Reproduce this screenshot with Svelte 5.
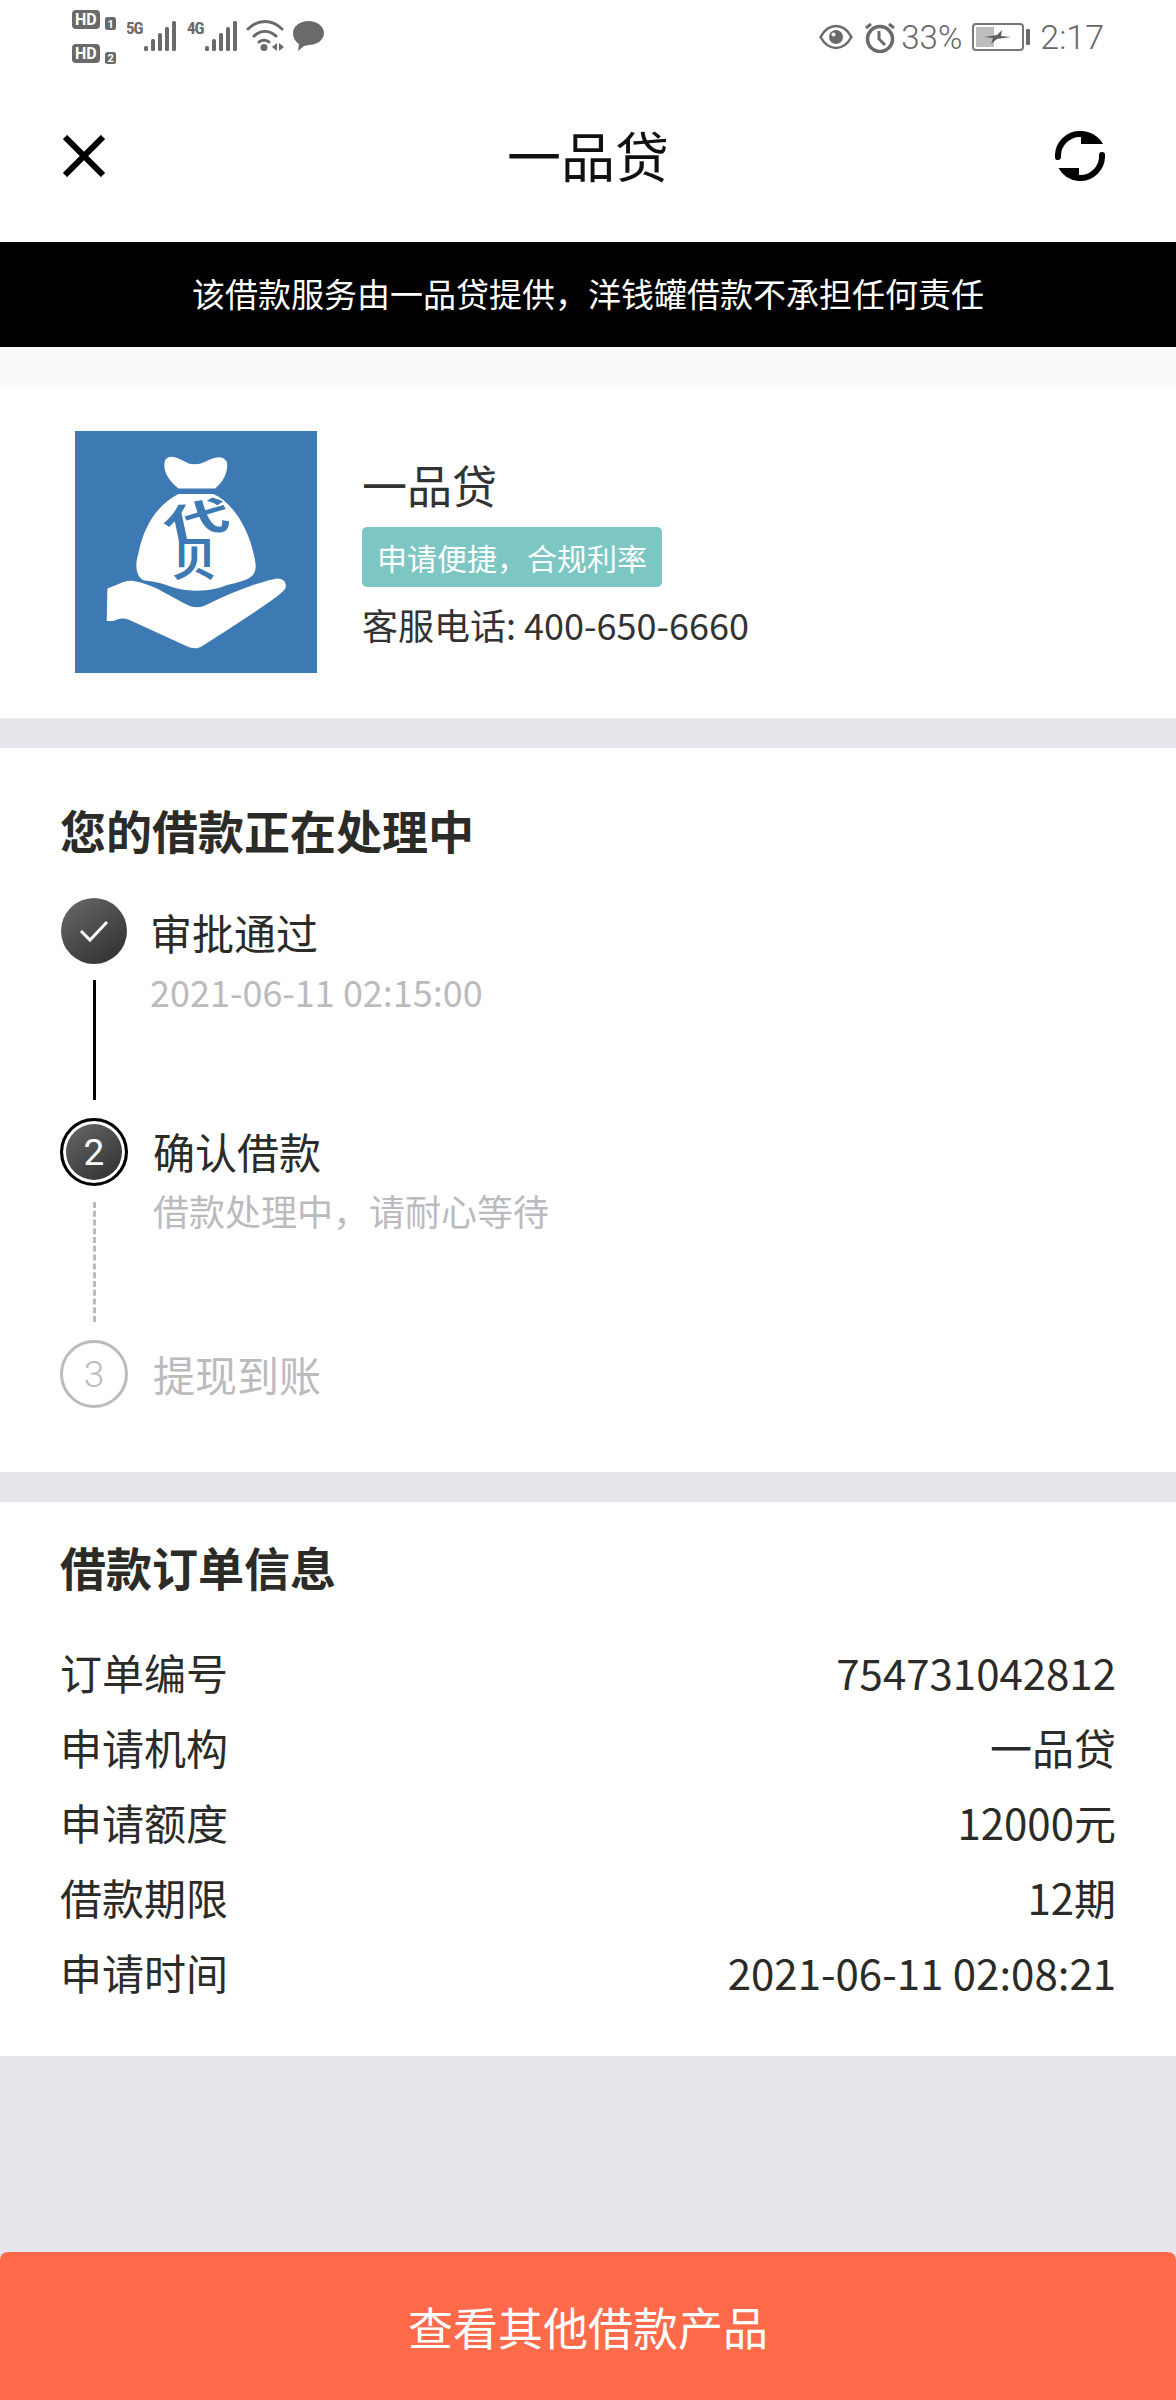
<script>
  const steps = [
    { key: 'done', title: '审批通过', note: '2021-06-11 02:15:00' },
    { key: 'active', title: '确认借款', note: '借款处理中，请耐心等待', num: 2 },
    { key: 'todo', title: '提现到账', num: 3 }
  ];
  const order = [
    ['订单编号', '754731042812'],
    ['申请机构', '一品贷'],
    ['申请额度', '12000元'],
    ['借款期限', '12期'],
    ['申请时间', '2021-06-11 02:08:21']
  ];
  const bars = [[0, 46], [7, 39], [14, 33], [21, 27], [28, 21]];
</script>

<div class="page">
  <div class="status">
    <svg class="status-left" viewBox="70 8 256 58" width="256" height="58">
      <g fill="#6a6a6a">
        <rect x="72" y="10" width="28" height="19" rx="4" />
        <rect x="72" y="44" width="28" height="19" rx="4" />
        <rect x="105" y="17" width="11" height="13" rx="2.5" />
        <rect x="105" y="52" width="11" height="12" rx="2.5" />
        <text x="75" y="25" class="hd">HD</text>
        <text x="75" y="59" class="hd">HD</text>
        <text x="107.500" y="27.500" class="tiny">1</text>
        <text x="107.500" y="62" class="tiny">2</text>
        <text x="126" y="34" class="net">5G</text>
        <text x="187" y="34" class="net">4G</text>
        {#each bars as b}
          <rect x={144 + b[0]} y={b[1]} width="4" height={51 - b[1]} rx="1.5" />
          <rect x={205 + b[0]} y={b[1]} width="4" height={51 - b[1]} rx="1.5" />
        {/each}
        <circle cx="264" cy="47.500" r="3.500" />
        <path d="M272 47l5-4v8zM279 43l5 4-5 4z" />
        <path d="M293 33c0-7 7-12 15.500-12S324 26 324 33s-7 12-15 12l-5 1-6 5 1-7c-3-2-6-6-6-11z" />
      </g>
      <g fill="none" stroke="#6a6a6a" stroke-width="3" stroke-linecap="round">
        <path d="M248 29c10-10 24-10 34 0" />
        <path d="M254 36c7-6 15-6 22 0" />
        <path d="M259 42c3-2 7-2 10 0" />
      </g>
    </svg>
    <div class="status-right">
      <svg viewBox="0 0 34 26" width="34" height="26" class="eye">
        <path d="M1.500 13C6 5 11 2 17 2s11 3 15.500 11C28 21 23 24 17 24S6 21 1.500 13z" fill="none" stroke="#6a6a6a" stroke-width="2.500" />
        <circle cx="17" cy="13" r="7" fill="#6a6a6a" />
        <circle cx="14.500" cy="10.500" r="2" fill="#fff" />
      </svg>
      <svg viewBox="0 0 32 32" width="32" height="32" class="alarm">
        <circle cx="16" cy="18" r="12.500" fill="none" stroke="#6a6a6a" stroke-width="3.500" />
        <path d="M15 10v8l6 6M2 7l5-4M30 7l-5-4" fill="none" stroke="#6a6a6a" stroke-width="3" />
      </svg>
      <span class="pct">33%</span>
      <svg viewBox="0 0 59 28" width="59" height="28" class="battery">
        <rect x="1" y="1" width="50" height="26" rx="3" fill="none" stroke="#777" stroke-width="2" />
        <rect x="4" y="4" width="18" height="20" fill="#bdbdbd" />
        <path d="M12 14l13-2 5-5-1 6 10 1-14 2-6 5 2-6z" fill="#5f5f5f" />
        <rect x="54" y="6" width="4" height="16" rx="1" fill="#6a6a6a" />
      </svg>
      <span class="time">2:17</span>
    </div>
  </div>

  <header class="nav">
    <svg viewBox="0 0 42 42" width="42" height="42">
      <path d="M2 2l38 38M40 2L2 40" stroke="#000" stroke-width="6" fill="none" />
    </svg>
    <h1>一品贷</h1>
    <svg class="refresh" viewBox="0 0 50 50" width="50" height="50">
      <path d="M3 26A22 22 0 0 1 26 3M47 24A22 22 0 0 1 24 47" fill="none" stroke="#000" stroke-width="6" stroke-linecap="round" />
      <path d="M26 13h22A25 25 0 0 0 26 0zM24 37H3.500A25 25 0 0 0 24 50z" fill="#000" />
    </svg>
  </header>

  <div class="notice">该借款服务由一品贷提供，洋钱罐借款不承担任何责任</div>
  <div class="strip"></div>

  <section class="lender">
    <svg class="logo" viewBox="75 63 725 725" width="242" height="242">
      <rect x="75" y="63" width="725" height="725" fill="#3d79b3" />
      <g fill="#fff">
        <path d="M345 150C360 130 385 145 405 155 420 165 445 165 465 155 485 145 515 130 530 155 535 185 520 215 495 235L385 235C360 215 335 185 345 150Z" />
        <path d="M385 252L490 252C540 275 590 340 610 430 620 470 620 490 595 505 560 520 540 520 510 532 460 545 420 545 370 532 340 520 320 515 280 510 255 495 255 460 265 430 280 350 320 285 385 252Z" />
        <path d="M172 535C200 525 225 510 245 512 270 515 300 525 330 540L400 578C430 595 450 595 480 578 540 550 610 520 670 507 695 500 712 515 705 535 690 560 560 640 455 708 440 717 425 715 410 708L240 630C220 620 205 625 190 632L170 632Z" />
      </g>
      <text class="logo-glyph top" transform="translate(438 327) rotate(-12) scale(1 .58)" y="76">代</text>
      <text class="logo-glyph low" transform="translate(432 447)" y="51">贝</text>
    </svg>
    <div class="lender-info">
      <div class="lender-name">一品贷</div>
      <div class="tag">申请便捷，合规利率</div>
      <div class="phone">客服电话: 400-650-6660</div>
    </div>
  </section>

  <section class="progress">
    <h2>您的借款正在处理中</h2>
    <ol class="steps">
      {#each steps as s, i}
        <li class="step {s.key}">
          <div class="marker">
            <div class="dot">
              {#if s.key === 'done'}
                <svg viewBox="0 0 30 24" width="30" height="24">
                  <path d="M2 12l9 9L28 3" fill="none" stroke="#fff" stroke-width="3" />
                </svg>
              {:else}
                {s.num}
              {/if}
            </div>
            {#if i < steps.length - 1}
              <div class="link"></div>
            {/if}
          </div>
          <div class="step-text">
            <div class="step-title">{s.title}</div>
            {#if s.note}
              <div class="step-note">{s.note}</div>
            {/if}
          </div>
        </li>
      {/each}
    </ol>
  </section>

  <section class="order">
    <h2>借款订单信息</h2>
    {#each order as row}
      <div class="row">
        <span>{row[0]}</span>
        <span>{row[1]}</span>
      </div>
    {/each}
  </section>

  <button class="cta">查看其他借款产品</button>
</div>

<style>
  :global(body) {
    margin: 0;
    background: #e6e6ec;
  }

  .page {
    width: 1176px;
    min-height: 2400px;
    display: flex;
    flex-direction: column;
    background: #e6e6ec;
    font-family: "Noto Sans CJK SC", "Noto Sans", sans-serif;
    color: #2b2b27;
  }

  .status {
    height: 74px;
    background: #fff;
    display: flex;
    justify-content: space-between;
    align-items: flex-start;
    padding: 8px 72px 0 70px;
    box-sizing: border-box;
  }

  .status-left {
    display: block;
  }

  .hd {
    font: 700 16px "Roboto", sans-serif;
    fill: #fff;
  }

  .tiny {
    font: 700 11px "Roboto", sans-serif;
    fill: #fff;
  }

  .net {
    font: 700 17px "Roboto Condensed", "Roboto", sans-serif;
    letter-spacing: -1px;
  }

  .status-right {
    display: flex;
    align-items: center;
    height: 44px;
    margin-top: 7px;
    color: #666;
    font: 300 33px "Roboto", sans-serif;
  }

  .eye {
    margin-right: 11px;
  }

  .alarm {
    margin-right: 5px;
  }

  .battery {
    margin-left: 10px;
    margin-right: 9px;
  }

  .time {
    font-size: 34px;
  }

  .nav {
    height: 168px;
    background: #fff;
    display: grid;
    grid-template-columns: 1fr auto 1fr;
    align-items: center;
    box-sizing: border-box;
    padding: 0 71px 4px 63px;
  }

  .nav h1 {
    margin: 0 0 3px 8px;
    font-size: 54px;
    font-weight: 400;
    line-height: 70px;
    color: #111;
  }

  .refresh {
    justify-self: end;
  }

  .notice {
    height: 105px;
    background: #000;
    color: #fff;
    font-size: 33px;
    line-height: 102px;
    text-align: center;
  }

  .strip {
    height: 38px;
    background: #f9f9f9;
  }

  .lender {
    height: 333px;
    box-sizing: border-box;
    padding: 1px 0 0 75px;
    background: #fff;
    display: flex;
    align-items: center;
  }

  .logo {
    display: block;
    flex: none;
    margin-right: 45px;
  }

  .lender-name {
    font-size: 45px;
    line-height: 60px;
    color: #333;
  }

  .tag {
    margin-top: 12px;
    width: 300px;
    height: 60px;
    border-radius: 5px;
    background: #7cc7c3;
    color: #fff;
    font-size: 30px;
    line-height: 60px;
    text-align: center;
  }

  .phone {
    margin-top: 12px;
    font-size: 36px;
    line-height: 50px;
    color: #333;
  }

  .progress {
    margin-top: 30px;
    height: 724px;
    background: #fff;
    box-sizing: border-box;
    padding: 47px 60px 0;
  }

  h2 {
    margin: 0;
    font-size: 46px;
    font-weight: 700;
    line-height: 68px;
    color: #2b2b27;
  }

  .steps {
    list-style: none;
    margin: 35px 0 0;
    padding: 0;
  }

  .step {
    display: flex;
    height: 220px;
  }

  .step.active {
    height: 222px;
  }

  .marker {
    width: 68px;
    margin-right: 25px;
    display: flex;
    flex-direction: column;
    align-items: center;
    flex: none;
  }

  .dot {
    width: 66px;
    height: 66px;
    border-radius: 50%;
    box-sizing: border-box;
    display: flex;
    align-items: center;
    justify-content: center;
    color: #fff;
    font: 400 37px "Roboto", sans-serif;
    background: linear-gradient(145deg, #6a6a6a, #2c2c2c);
    flex: none;
  }

  .active .dot {
    width: 68px;
    height: 68px;
    border: 3px solid #000;
    box-shadow: inset 0 0 0 3px #fff;
  }

  .todo .dot {
    width: 68px;
    height: 68px;
    background: #fff;
    border: 3px solid #bbbbbf;
    color: #bbbbbf;
    font-weight: 300;
  }

  .link {
    margin-top: 16px;
    height: 120px;
    border-left: 3px solid #000;
  }

  .active .link {
    border-left: 3px dashed #bbbbbf;
  }

  .step-title {
    font-size: 42px;
    line-height: 66px;
    color: #2b2b27;
  }

  .done .step-title {
    margin-top: 1px;
  }

  .done .step-text {
    margin-left: -3px;
  }

  .done .step-note {
    margin-top: -2px;
  }

  .step-note {
    font-size: 36px;
    line-height: 56px;
    color: #bbbbbf;
  }

  .active .step-note {
    margin-top: -2px;
  }

  .todo .step-title {
    margin-top: 1px;
    color: #bbbbbf;
  }

  .order {
    margin-top: 30px;
    height: 554px;
    background: #fff;
    box-sizing: border-box;
    padding: 30px 60px 0;
  }

  .order h2 {
    margin-bottom: 34px;
  }

  .row {
    display: flex;
    justify-content: space-between;
    font-size: 42px;
    line-height: 75px;
    color: #2b2b27;
  }

  .cta {
    all: unset;
    margin-top: auto;
    height: 148px;
    background: #ff6a4a;
    border-radius: 8px 8px 0 0;
    color: #fff;
    font-size: 45px;
    line-height: 150px;
    text-align: center;
  }

  .logo-glyph {
    font-family: "Noto Sans CJK SC", sans-serif;
    font-weight: 700;
    fill: #3d79b3;
    text-anchor: middle;
  }

  .logo-glyph.top {
    font-size: 200px;
  }

  .logo-glyph.low {
    font-size: 135px;
  }
</style>
